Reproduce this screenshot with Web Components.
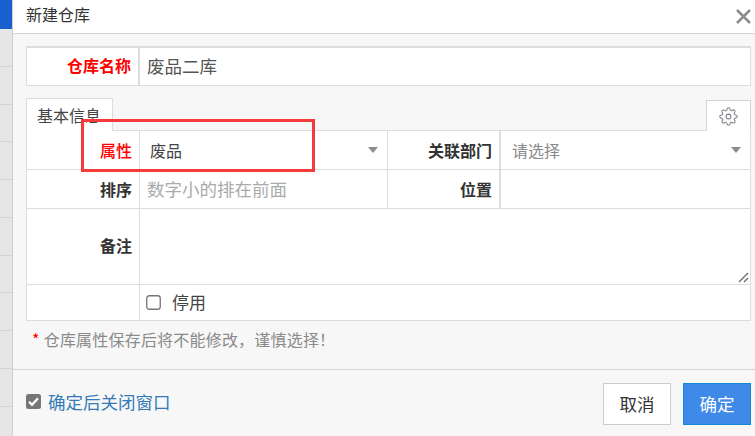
<!DOCTYPE html>
<html lang="zh">
<head>
<meta charset="utf-8">
<title>新建仓库</title>
<style>
html,body{margin:0;height:100%;overflow:hidden;background:#f7f7f7}
body{font:16px "Noto Sans CJK SC","Liberation Sans",sans-serif;color:#333}
</style>
</head>
<body>
<wh-page>
    <wh-strip slot="strip"></wh-strip>
    <wh-dialog heading="新建仓库">
        <wh-name-row label="仓库名称">废品二库</wh-name-row>
        <wh-tabs label="基本信息"></wh-tabs>
        <wh-grid>
            <wh-label required>属性</wh-label>
            <wh-select>废品</wh-select>
            <wh-label edge>关联部门</wh-label>
            <wh-select placeholder>请选择</wh-select>

            <wh-label>排序</wh-label>
            <wh-input placeholder>数字小的排在前面</wh-input>
            <wh-label edge>位置</wh-label>
            <wh-input></wh-input>

            <wh-label style="--pb:3px">备注</wh-label>
            <wh-textarea></wh-textarea>

            <wh-label></wh-label>
            <wh-input wide><wh-check>停用</wh-check></wh-input>
        </wh-grid>
        <wh-note>仓库属性保存后将不能修改，谨慎选择！</wh-note>
        <wh-check slot="footer-left" checked>确定后关闭窗口</wh-check>
        <wh-button slot="footer-right">取消</wh-button>
        <wh-button slot="footer-right" primary>确定</wh-button>
    </wh-dialog>
</wh-page>

<script>
class WhPage extends HTMLElement{
    constructor(){
        super()
        this.attachShadow({mode:'open'})
        this.shadowRoot.innerHTML = `
        <style>
            :host{display:flex;width:755px;height:436px;overflow:hidden}
        </style>
        <slot name="strip"></slot>
        <slot></slot>
        `
    }
}

// the page behind the dialog, only a sliver of it is visible
class WhStrip extends HTMLElement{
    constructor(){
        super()
        this.attachShadow({mode:'open'})
        this.shadowRoot.innerHTML = `
        <style>
            :host{display:flex;flex-direction:column;width:12px;height:436px;background:#e6e6e6;flex:none;overflow:hidden}
            .top{height:29px;background:#1a5fd0;flex:none}
            .row{height:37.75px;box-sizing:border-box;border-bottom:1px solid #d4d4d4;flex:none}
        </style>
        <div class="top"></div>
        ${'<div class="row"></div>'.repeat(11)}
        `
    }
}

class WhDialog extends HTMLElement{
    constructor(){
        super()
        this.attachShadow({mode:'open'})
        this.shadowRoot.innerHTML = `
        <style>
            :host{display:flex;flex-direction:column;position:relative;flex:1;height:436px;border-left:1px solid #cfcfcf;box-sizing:border-box;background:#f7f7f7}
            .title{display:flex;align-items:center;justify-content:space-between;height:33px;background:#fff;border-bottom:1px solid #d4d4d4;padding:0 4px 0 13px;flex:none;color:#333;font-size:16px}
            .title span{padding-bottom:5px}
            .close{display:block}
            .body{height:336px;padding:12px 4px 0 13px;box-sizing:border-box;border-bottom:1px solid #d4d4d4;flex:none}
            .foot{flex:1;display:flex;align-items:flex-start;justify-content:space-between;padding:13px 4px 0 13px}
            .left{padding-top:8px}
            .right{display:flex;gap:12px}
            .mark{position:absolute;left:68px;top:119px;width:234px;height:53px;box-sizing:border-box;border:3px solid #f33b3b;pointer-events:none;z-index:2}
        </style>
        <div class="title">
            <span id="heading"></span>
            <svg class="close" width="15" height="15" viewBox="0 0 15 15"><path d="M1 1l13 13M14 1L1 14" stroke="#8c8c8c" stroke-width="2.5" fill="none"/></svg>
        </div>
        <div class="body"><slot></slot></div>
        <div class="foot">
            <div class="left"><slot name="footer-left"></slot></div>
            <div class="right"><slot name="footer-right"></slot></div>
        </div>
        <div class="mark"></div>
        `
    }
    connectedCallback(){
        this.shadowRoot.getElementById('heading').textContent = this.getAttribute('heading')
    }
}

class WhNameRow extends HTMLElement{
    constructor(){
        super()
        this.attachShadow({mode:'open'})
        this.shadowRoot.innerHTML = `
        <style>
            :host{display:grid;grid-template-columns:113px 1fr;height:40px;box-sizing:border-box;background:#fff;border:1px solid #ddd;border-top-width:2px}
            .l{display:flex;align-items:center;justify-content:flex-end;box-sizing:border-box;padding:0 7px 3px 0;color:#f00;font-weight:700;border-right:2px solid #ddd}
            .v{display:flex;align-items:center;padding:0 0 3px 7px;font-size:17.5px;color:#555}
        </style>
        <div class="l" id="l"></div>
        <div class="v"><slot></slot></div>
        `
    }
    connectedCallback(){
        this.shadowRoot.getElementById('l').textContent = this.getAttribute('label')
    }
}

class WhTabs extends HTMLElement{
    constructor(){
        super()
        this.attachShadow({mode:'open'})
        this.shadowRoot.innerHTML = `
        <style>
            :host{display:flex;justify-content:space-between;align-items:flex-end;height:32px;margin-top:12px;position:relative;z-index:1}
            .tab{width:87px;height:33px;margin-bottom:-1px;padding-left:10px;box-sizing:border-box;background:#fff;border:1px solid #ddd;border-bottom:0;line-height:32px;color:#444;font-size:16px}
            .gear{width:45px;height:31px;margin-bottom:-1px;box-sizing:border-box;background:#fff;border:1px solid #d4d4d4;border-bottom:0;display:flex;align-items:center;justify-content:center}
        </style>
        <div class="tab" id="t"></div>
        <div class="gear">
            <svg width="19" height="19" viewBox="0 0 24 24" fill="none" stroke="#7a7f86" stroke-width="1.3" stroke-linecap="round" stroke-linejoin="round"><circle cx="12" cy="12" r="3"/><path d="M19.4 15a1.65 1.65 0 0 0 .33 1.82l.06.06a2 2 0 0 1 0 2.83 2 2 0 0 1-2.83 0l-.06-.06a1.65 1.65 0 0 0-1.82-.33 1.65 1.65 0 0 0-1 1.51V21a2 2 0 0 1-2 2 2 2 0 0 1-2-2v-.09A1.65 1.65 0 0 0 9 19.4a1.65 1.65 0 0 0-1.82.33l-.06.06a2 2 0 0 1-2.83 0 2 2 0 0 1 0-2.83l.06-.06a1.65 1.65 0 0 0 .33-1.82 1.65 1.65 0 0 0-1.51-1H3a2 2 0 0 1-2-2 2 2 0 0 1 2-2h.09A1.65 1.65 0 0 0 4.6 9a1.65 1.65 0 0 0-.33-1.82l-.06-.06a2 2 0 0 1 0-2.83 2 2 0 0 1 2.83 0l.06.06a1.65 1.65 0 0 0 1.82.33H9a1.65 1.65 0 0 0 1-1.51V3a2 2 0 0 1 2-2 2 2 0 0 1 2 2v.09a1.65 1.65 0 0 0 1 1.51 1.65 1.65 0 0 0 1.82-.33l.06-.06a2 2 0 0 1 2.83 0 2 2 0 0 1 0 2.83l-.06.06a1.65 1.65 0 0 0-.33 1.82V9a1.65 1.65 0 0 0 1.51 1H21a2 2 0 0 1 2 2 2 2 0 0 1-2 2h-.09a1.65 1.65 0 0 0-1.51 1z"/></svg>
        </div>
        `
    }
    connectedCallback(){
        this.shadowRoot.getElementById('t').textContent = this.getAttribute('label')
    }
}

class WhGrid extends HTMLElement{
    constructor(){
        super()
        this.attachShadow({mode:'open'})
        this.shadowRoot.innerHTML = `
        <style>
            :host{display:grid;grid-template-columns:113px 248px 113px 1fr;grid-template-rows:39px 39px 76px 36px;background:#fff;border-top:1px solid #ddd;border-left:1px solid #ddd;box-sizing:border-box}
        </style>
        <slot></slot>
        `
    }
}

class WhLabel extends HTMLElement{
    constructor(){
        super()
        this.attachShadow({mode:'open'})
        this.shadowRoot.innerHTML = `
        <style>
            :host{display:flex;align-items:center;justify-content:flex-end;padding:0 7px var(--pb,1px) 0;box-sizing:border-box;border-right:1px solid #ddd;border-bottom:1px solid #ddd;font-weight:700;color:#333}
            :host([required]){color:#f00;font-weight:500}
            :host([edge]){border-right-width:2px}
        </style>
        <slot></slot>
        `
    }
}

class WhSelect extends HTMLElement{
    constructor(){
        super()
        this.attachShadow({mode:'open'})
        this.shadowRoot.innerHTML = `
        <style>
            :host{display:flex;align-items:center;justify-content:space-between;padding:0 9px 0 10px;box-sizing:border-box;border-right:1px solid #ddd;border-bottom:1px solid #ddd;color:#444}
            :host([placeholder]){color:#888;padding-left:11px}
            span{padding-bottom:1px}
            i{width:0;height:0;border:5.5px solid transparent;border-top:6px solid #8c8c8c;border-bottom:0}
        </style>
        <span><slot></slot></span><i></i>
        `
    }
}

class WhInput extends HTMLElement{
    constructor(){
        super()
        this.attachShadow({mode:'open'})
        this.shadowRoot.innerHTML = `
        <style>
            :host{display:flex;align-items:center;padding:0 0 1px 7px;box-sizing:border-box;border-right:1px solid #ddd;border-bottom:1px solid #ddd;color:#444;font-size:17px}
            :host([placeholder]){color:#aaa;font-size:17.5px}
            :host([wide]){grid-column:2 / 5;padding:0 0 1px 6px}
        </style>
        <slot></slot>
        `
    }
}

class WhTextarea extends HTMLElement{
    constructor(){
        super()
        this.attachShadow({mode:'open'})
        this.shadowRoot.innerHTML = `
        <style>
            :host{display:block;grid-column:2 / 5;position:relative;box-sizing:border-box;border-right:1px solid #ddd;border-bottom:1px solid #ddd}
            svg{position:absolute;right:1px;bottom:1px}
        </style>
        <svg width="11" height="11" viewBox="0 0 11 11"><path d="M1 10L10 1M6 10L10 6" stroke="#666" stroke-width="1.2" fill="none"/></svg>
        `
    }
}

class WhCheck extends HTMLElement{
    constructor(){
        super()
        this.attachShadow({mode:'open'})
        this.shadowRoot.innerHTML = `
        <style>
            :host{display:flex;align-items:center;font-size:17px;line-height:20px;color:#444}
            :host([checked]){color:#337ab7;font-size:17.5px}
            #box{display:block;flex:none;width:15px;height:15px;margin-right:11px}
            :host([checked]) #box{margin-right:7px}
            svg{display:block}
            .t{position:relative}
            :host([checked]) .t{top:1px}
        </style>
        <span id="box"></span><span class="t"><slot></slot></span>
        `
    }
    connectedCallback(){
        let on = this.hasAttribute('checked')
        this.shadowRoot.getElementById('box').innerHTML = on
            ? `<svg width="15" height="15" viewBox="0 0 15 15"><rect width="15" height="15" rx="2.5" fill="#767676"/><path d="M3 7.8l3 3 6-6.6" stroke="#fff" stroke-width="2.2" fill="none"/></svg>`
            : `<svg width="15" height="15" viewBox="0 0 15 15"><rect x=".75" y=".75" width="13.5" height="13.5" rx="2.5" fill="#fff" stroke="#767676" stroke-width="1.3"/></svg>`
    }
}

class WhNote extends HTMLElement{
    constructor(){
        super()
        this.attachShadow({mode:'open'})
        this.shadowRoot.innerHTML = `
        <style>
            :host{display:block;margin:6px 0 0 6px;font-size:16px;letter-spacing:.2px;line-height:24px;color:#8a8a8a;white-space:nowrap}
            b{color:#f00;font-weight:400;margin-right:4px}
        </style>
        <b>*</b><slot></slot>
        `
    }
}

class WhButton extends HTMLElement{
    constructor(){
        super()
        this.attachShadow({mode:'open'})
        this.shadowRoot.innerHTML = `
        <style>
            :host{display:flex;align-items:center;justify-content:center;width:68px;height:42px;padding-bottom:2px;box-sizing:border-box;background:#fff;border:1px solid #ccc;color:#333;font-size:17.5px}
            :host([primary]){background:#3f8ae8;border-color:#1588d4;color:#fff}
        </style>
        <slot></slot>
        `
    }
}

window.customElements.define('wh-page',WhPage);
window.customElements.define('wh-strip',WhStrip);
window.customElements.define('wh-dialog',WhDialog);
window.customElements.define('wh-name-row',WhNameRow);
window.customElements.define('wh-tabs',WhTabs);
window.customElements.define('wh-grid',WhGrid);
window.customElements.define('wh-label',WhLabel);
window.customElements.define('wh-select',WhSelect);
window.customElements.define('wh-input',WhInput);
window.customElements.define('wh-textarea',WhTextarea);
window.customElements.define('wh-check',WhCheck);
window.customElements.define('wh-note',WhNote);
window.customElements.define('wh-button',WhButton);
</script>
</body>
</html>
